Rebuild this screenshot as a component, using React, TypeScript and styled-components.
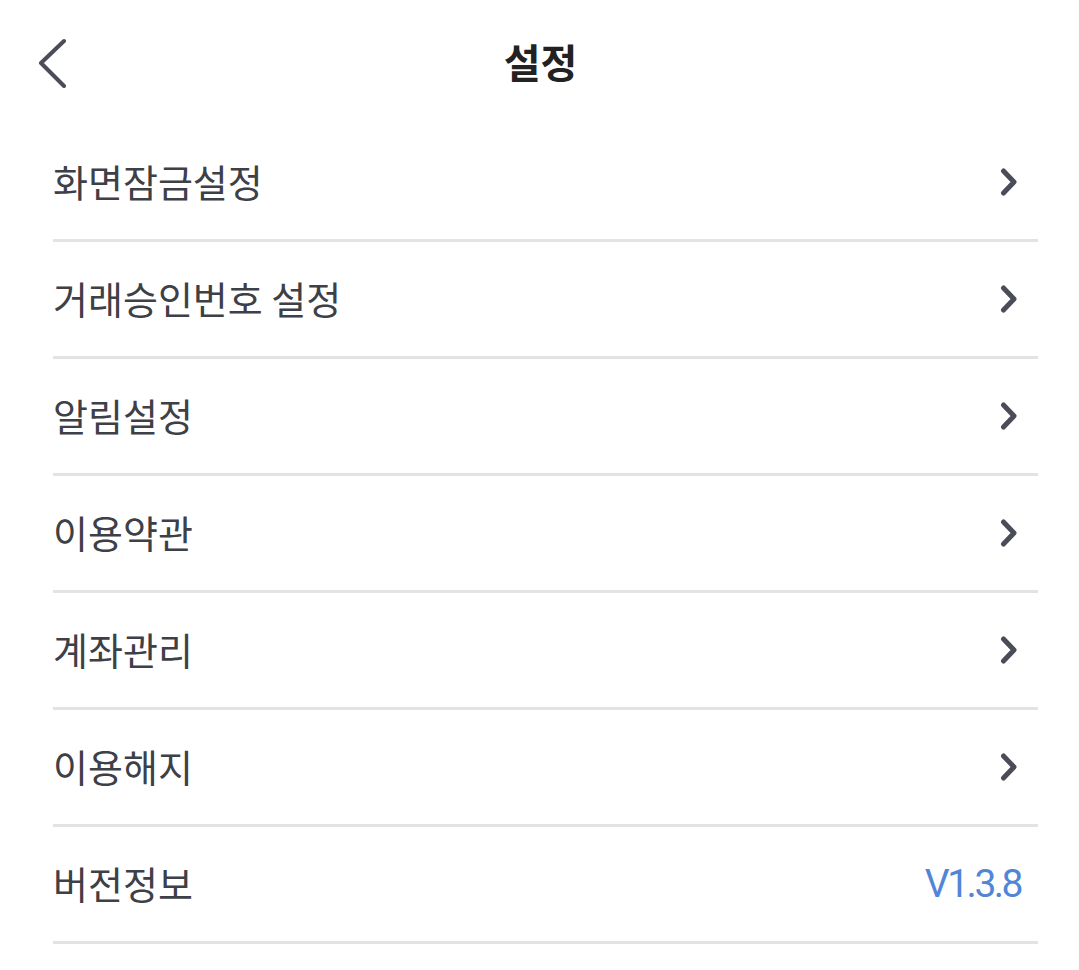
import React from "react";
import { createGlobalStyle, styled } from "styled-components";

const GlobalStyle = createGlobalStyle`
  html, body {
    margin: 0;
    padding: 0;
    background: #ffffff;
  }
  body {
    font-family: "Noto Sans CJK KR", "Noto Sans", sans-serif;
  }
`;

const Page = styled.div`
  width: 1079px;
  min-height: 970px;
  background: #ffffff;
`;

const Header = styled.header`
  position: relative;
  height: 125px;
  display: flex;
  align-items: center;
  justify-content: center;
`;

const BackButton = styled.button`
  position: absolute;
  left: 30px;
  top: 34px;
  width: 44px;
  height: 58px;
  padding: 0;
  border: none;
  background: none;
  display: flex;
  align-items: center;
  justify-content: center;
  cursor: pointer;
`;

const Title = styled.h1`
  margin: 0 0 0 2px;
  font-size: 40px;
  font-weight: 700;
  color: #222222;
  line-height: 1;
  padding-bottom: 4px;
`;

const List = styled.ul`
  list-style: none;
  margin: 0;
  padding: 0 41px 0 53px;
`;

const Row = styled.li`
  height: 114px;
  border-bottom: 3px solid #e3e3e3;
  display: flex;
  align-items: center;
  justify-content: space-between;
  padding-right: 21px;
  cursor: pointer;
`;

const Label = styled.span`
  font-size: 38px;
  color: #3d4046;
  line-height: 1;
  padding-bottom: 2px;
`;

const Version = styled.span`
  font-family: Roboto, "Noto Sans", sans-serif;
  font-size: 39px;
  color: #5185d8;
  line-height: 1;
  letter-spacing: -2.5px;
  margin-right: -4px;
`;

const Chevron = () => (
  <svg width="17" height="28" viewBox="0 0 17 28">
    <path
      d="M3.5 3 L14 14 L3.5 25"
      fill="none"
      stroke="#4a4d59"
      strokeWidth="5"
      strokeLinecap="round"
      strokeLinejoin="round"
    />
  </svg>
);

const BackIcon = () => (
  <svg width="30" height="50" viewBox="0 0 30 50">
    <path
      d="M27 3 L4 25 L27 48"
      fill="none"
      stroke="#4a4d59"
      strokeWidth="4"
      strokeLinecap="round"
      strokeLinejoin="round"
    />
  </svg>
);

const items = [
  "화면잠금설정",
  "거래승인번호 설정",
  "알림설정",
  "이용약관",
  "계좌관리",
  "이용해지",
];

export default function App() {
  return (
    <Page>
      <GlobalStyle />
      <Header>
        <BackButton aria-label="뒤로">
          <BackIcon />
        </BackButton>
        <Title>설정</Title>
      </Header>
      <List>
        {items.map((item) => (
          <Row key={item}>
            <Label>{item}</Label>
            <Chevron />
          </Row>
        ))}
        <Row>
          <Label>버전정보</Label>
          <Version>V1.3.8</Version>
        </Row>
      </List>
    </Page>
  );
}
